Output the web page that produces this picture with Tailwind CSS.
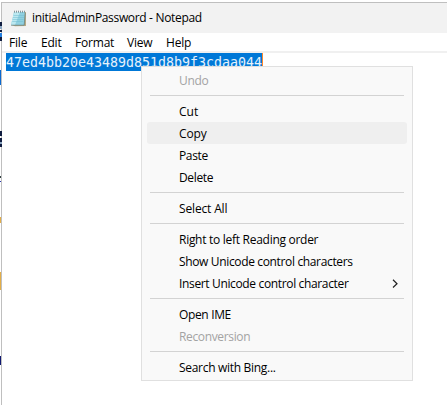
<!DOCTYPE html>
<html lang="en">
<head>
<meta charset="utf-8">
<title>initialAdminPassword - Notepad</title>
<script src="https://cdn.jsdelivr.net/npm/@tailwindcss/browser@4"></script>
</head>
<body class="relative flex h-[405px] w-[447px] flex-col overflow-hidden bg-white pt-[2px] font-['Open_Sans','Noto_Sans',sans-serif] text-[12px] text-black">
  <!-- Sliver of the page behind the window -->
  <svg class="absolute left-0 top-0" width="2" height="405" viewBox="0 0 2 405">
    <path fill="#101d40" d="M0 22h2v4H0zM0 37h2v4H0zM0 131h2v5H0zM0 138h2v4H0zM0 144h2v3H0z"/>
    <path fill="#8ba5c0" d="M0 26h2v3H0zM0 142h2v2H0z"/>
    <path fill="#101d40" d="M0 30h2v2H0z"/>
    <path fill="#2580e0" d="M0 33h2v4H0z"/>
    <path fill="#0b69d0" d="M0 70h1v15H0z"/>
    <path fill="#344344" d="M0 176h1v2H0z"/><path fill="#2a38b0" d="M0 181h1v1H0z"/>
    <path fill="#e3ae48" d="M0 217h1v6H0zM0 272h1v18H0z"/>
    <path fill="#101870" d="M0 356h1v9H0z"/>
  </svg>
  <main class="ml-px flex flex-1 flex-col border-l border-t border-[#bfbfbf]">
    <header class="flex h-[30px] shrink-0 items-center bg-[#f2f2f2] pl-[8px]">
      <svg width="17" height="17" viewBox="0 0 17 17">
        <path d="M14 2h2v14l-11 .2-4-1.2z" fill="#b9ab86"/>
        <path d="M4 2h11l-1 13H1z" fill="#8fd0e0"/>
        <path d="M4 2h6L5 15H1z" fill="#bce8f0"/>
        <path d="M3.5 5.5h11M3 7.5h11M2.6 9.5h11M2.2 11.5h11" stroke="#70bcd0" stroke-width=".5"/>
        <path d="M15.2 3l-1 12.2H1" fill="none" stroke="#5b7f86" stroke-width=".7"/>
        <path d="M4.5.7v2M6.5.7v2M8.5.7v2M10.5.7v2M12.5.7v2M14.5.7v2" stroke="#6a7f86" stroke-width=".8"/>
      </svg>
      <h1 class="ml-[5px] whitespace-nowrap tracking-[-0.33px]">initialAdminPassword - Notepad</h1>
    </header>
    <nav class="flex h-[18px] shrink-0 items-center gap-[14px] bg-white pb-px pl-[7px] pt-[3px] tracking-[-0.2px]">
      <span class="w-[18px]">File</span><span class="w-[20px]">Edit</span><span class="w-[38px]">Format</span><span class="w-[25px]">View</span><span class="w-[25px]">Help</span>
    </nav>
    <div class="h-[2px] shrink-0 bg-[#f0f0f0]"></div>
    <section class="flex flex-1 items-start bg-white pl-[4px] font-['DejaVu_Sans_Mono',monospace] text-[13.29px]">
      <span class="h-[18px] w-[256px] whitespace-nowrap bg-[#0078d7] leading-[20px] text-white/90">47ed4bb20e43489d851d8b9f3cdaa044</span>
      <i class="h-[18px] w-px bg-[#ff8728]"></i>
    </section>
  </main>

  <div class="absolute left-[141px] top-[66px] flex h-[315px] w-[272px] flex-col border border-[#e0e0e0] bg-[#f9f9f9] px-[5px] py-[2px] leading-[24px] tracking-[-0.35px] whitespace-nowrap *:shrink-0">
    <div class="h-[22px] pl-[32px] text-[#a3a3a3]">Undo</div>
    <hr class="mx-[3px] my-[4px] border-[#d3d3d3]">
    <div class="h-[22px] pl-[32px] tracking-normal">Cut</div>
    <div class="h-[22px] rounded-[3px] bg-[#efefef] pl-[32px] tracking-[-0.1px]">Copy</div>
    <div class="h-[22px] pl-[32px]">Paste</div>
    <div class="h-[22px] pl-[32px]">Delete</div>
    <hr class="mx-[3px] my-[4px] border-[#d3d3d3]">
    <div class="h-[22px] pl-[32px] tracking-[-0.15px]">Select All</div>
    <hr class="mx-[3px] my-[4px] border-[#d3d3d3]">
    <div class="h-[22px] pl-[32px] tracking-[-0.28px]">Right to left Reading order</div>
    <div class="h-[22px] pl-[32px]">Show Unicode control characters</div>
    <div class="flex h-[22px] items-start justify-between pl-[32px] pr-[9px]">Insert Unicode control character
      <svg class="mt-[7px]" width="6" height="9" viewBox="0 0 6 9" fill="none" stroke="#222" stroke-width="1.2"><path d="M1 .8l4 3.9-4 3.8"/></svg>
    </div>
    <hr class="mx-[3px] my-[4px] border-[#d3d3d3]">
    <div class="h-[22px] pl-[32px]">Open IME</div>
    <div class="h-[22px] pl-[32px] text-[#a3a3a3]">Reconversion</div>
    <hr class="mx-[3px] my-[4px] border-[#d3d3d3]">
    <div class="h-[22px] pl-[32px] tracking-[-0.3px]">Search with Bing...</div>
  </div>
</body>
</html>
